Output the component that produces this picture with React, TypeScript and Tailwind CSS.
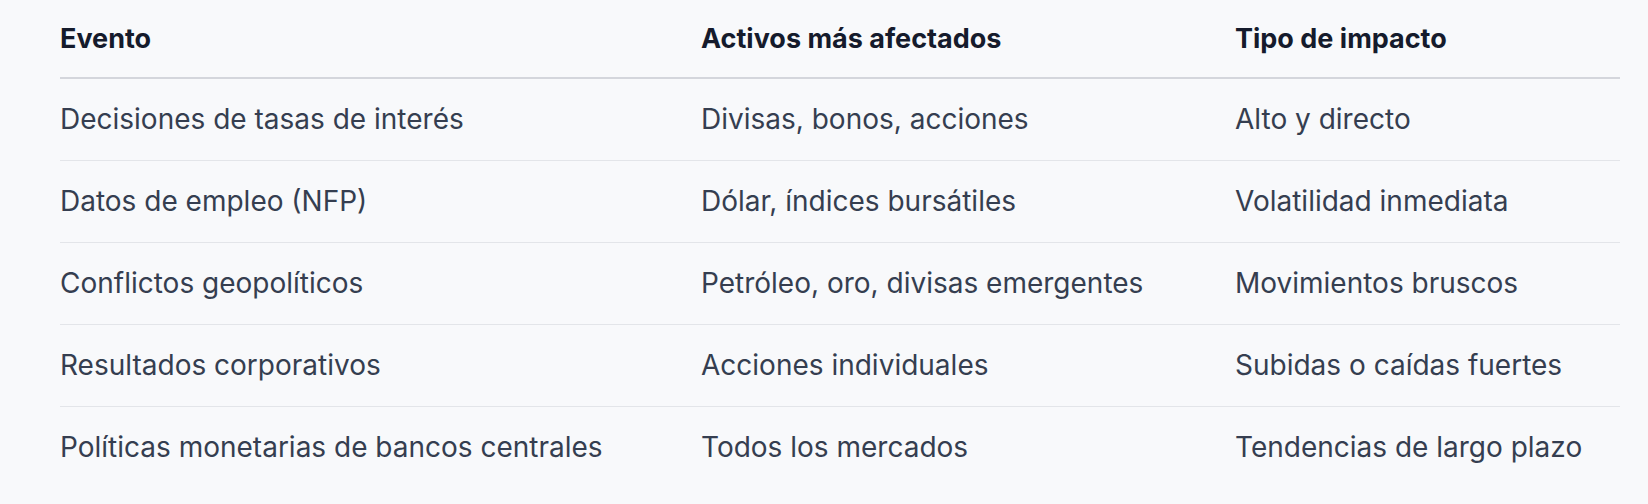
const rows = [
  ["Decisiones de tasas de interés", "Divisas, bonos, acciones", "Alto y directo"],
  ["Datos de empleo (NFP)", "Dólar, índices bursátiles", "Volatilidad inmediata"],
  ["Conflictos geopolíticos", "Petróleo, oro, divisas emergentes", "Movimientos bruscos"],
  ["Resultados corporativos", "Acciones individuales", "Subidas o caídas fuertes"],
  ["Políticas monetarias de bancos centrales", "Todos los mercados", "Tendencias de largo plazo"],
];

export default function App() {
  return (
    <div className="min-h-screen w-full bg-[#f8f9fb] px-[60px] font-['Inter',sans-serif]">
      <table className="w-[1560px] table-fixed border-collapse text-left">
        <colgroup>
          <col className="w-[641px]" />
          <col className="w-[534px]" />
          <col className="w-[385px]" />
        </colgroup>
        <thead>
          <tr className="h-[78px] border-b-2 border-[#d4d6dc]">
            <th className="p-0 pt-[2px] align-middle text-[27px] font-bold text-[#151b2c]">Evento</th>
            <th className="p-0 pt-[2px] align-middle text-[27px] font-bold text-[#151b2c]">Activos más afectados</th>
            <th className="p-0 pt-[2px] align-middle text-[27px] font-bold text-[#151b2c]">Tipo de impacto</th>
          </tr>
        </thead>
        <tbody>
          {rows.map((r, i) => (
            <tr
              key={i}
              className={i < rows.length - 1 ? "h-[82px] border-b border-[#e3e5e9]" : "h-[82px]"}
            >
              {r.map((c, j) => (
                <td key={j} className="p-0 align-middle text-[28px] text-[#353e50]">
                  {c}
                </td>
              ))}
            </tr>
          ))}
        </tbody>
      </table>
    </div>
  );
}
